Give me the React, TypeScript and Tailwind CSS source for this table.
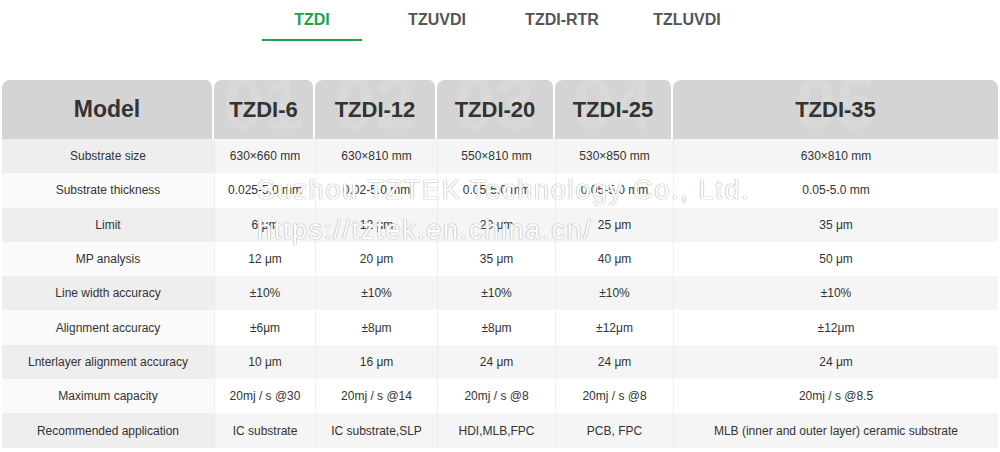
const tabs = ['TZDI', 'TZUVDI', 'TZDI-RTR', 'TZLUVDI']

const models = ['TZDI-6', 'TZDI-12', 'TZDI-20', 'TZDI-25', 'TZDI-35']

const rows: [string, string[]][] = [
  ['Substrate size', ['630×660 mm', '630×810 mm', '550×810 mm', '530×850 mm', '630×810 mm']],
  ['Substrate thickness', ['0.025-5.0 mm', '0.02-5.0 mm', '0.05-5.0 mm', '0.05-5.0 mm', '0.05-5.0 mm']],
  ['Limit', ['6 μm', '12 μm', '20 μm', '25 μm', '35 μm']],
  ['MP analysis', ['12 μm', '20 μm', '35 μm', '40 μm', '50 μm']],
  ['Line width accuracy', ['±10%', '±10%', '±10%', '±10%', '±10%']],
  ['Alignment accuracy', ['±6μm', '±8μm', '±8μm', '±12μm', '±12μm']],
  ['Lnterlayer alignment accuracy', ['10 μm', '16 μm', '24 μm', '24 μm', '24 μm']],
  ['Maximum capacity', ['20mj / s @30', '20mj / s @14', '20mj / s @8', '20mj / s @8', '20mj / s @8.5']],
  [
    'Recommended application',
    ['IC substrate', 'IC substrate,SLP', 'HDI,MLB,FPC', 'PCB, FPC', 'MLB (inner and outer layer) ceramic substrate'],
  ],
]

export default function App() {
  return (
    <div className="relative h-[452px] w-[1000px] overflow-hidden bg-white font-['Liberation_Sans',Arial,sans-serif] text-[#333]">
      <nav className="flex justify-center gap-[25px] pr-[1px]">
        {tabs.map((t, i) => (
          <div
            key={t}
            className={
              i === 0
                ? 'h-[41px] w-[100px] border-b-2 border-[#1aa34a] pt-[8px] text-center text-[16px] font-bold text-[#1aa34a]'
                : 'h-[41px] w-[100px] pt-[8px] text-center text-[16px] font-bold text-[#555]'
            }
          >
            {t}
          </div>
        ))}
      </nav>

      <div className="mx-[2px] mt-[39px] grid grid-cols-[212px_101px_122px_118px_118px_325px]">
        <div className="flex h-[59px] items-center justify-center rounded-t-lg border-r-2 border-white bg-[#d4d4d4] text-[23px] font-bold text-[#333]">
          Model
        </div>
        {models.map((m, i) => (
          <div
            key={m}
            className={
              i === models.length - 1
                ? 'relative flex h-[59px] items-center justify-center overflow-hidden rounded-t-lg bg-[#d4d4d4]'
                : 'relative flex h-[59px] items-center justify-center overflow-hidden rounded-t-lg border-r-2 border-white bg-[#d4d4d4]'
            }
          >
            <span className="absolute left-1/2 top-[-12px] -translate-x-1/2 text-[72px] font-bold leading-none text-[#d9d9d9]">
              0{i + 1}
            </span>
            <span className="relative text-[22px] font-bold text-[#333]">{m}</span>
          </div>
        ))}

        {rows.map(([label, vals], r) => (
          <div key={label} className="contents">
            <div
              className={
                r % 2 === 0
                  ? 'flex h-[34.3px] items-center justify-center bg-[#eeeeee] text-[12px]'
                  : 'flex h-[34.3px] items-center justify-center bg-[#fafafa] text-[12px]'
              }
            >
              {label}
            </div>
            {vals.map((v, c) => (
              <div
                key={c}
                className={
                  r % 2 === 0
                    ? 'flex h-[34.3px] items-center justify-center border-l border-[#ececec] bg-[#f5f5f5] text-[12px]'
                    : 'flex h-[34.3px] items-center justify-center border-l border-[#f0f0f0] bg-white text-[12px]'
                }
              >
                {v}
              </div>
            ))}
          </div>
        ))}
      </div>

      <div className="pointer-events-none absolute left-[257px] top-[170px] font-['Liberation_Sans',Arial,sans-serif] text-[27px] leading-[40px] tracking-[1.7px] text-white [text-shadow:0_0_1px_#a0a0a0,0_0_1px_#a0a0a0]">
        <div>Suzhou TZTEK Technology Co., Ltd.</div>
        <div>https://tztek.en.china.cn/</div>
      </div>
    </div>
  )
}
